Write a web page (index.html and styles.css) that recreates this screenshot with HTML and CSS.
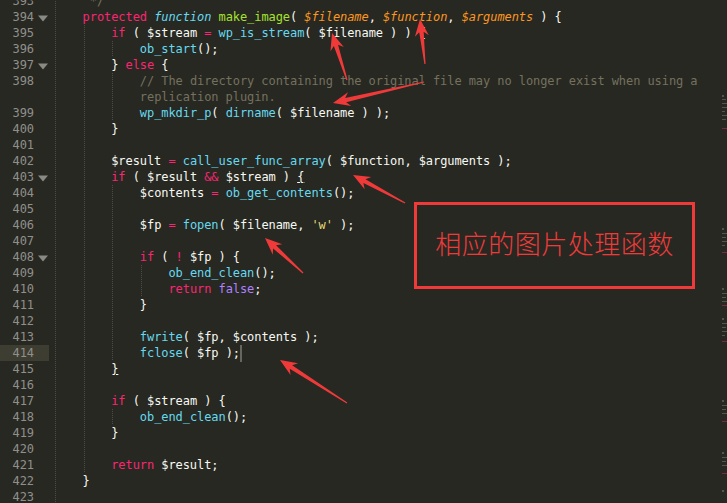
FILE: index.html
```html
<!DOCTYPE html>
<html>
<head>
<meta charset="utf-8">
<link rel="stylesheet" href="styles.css">
</head>
<body>
<div class="editor">
<div class="row"><div class="gutter"><span class="ln">393</span><span class="fold"></span></div><div class="code"><span class="ind">    </span><span class="c"> */</span></div></div>
<div class="row"><div class="gutter"><span class="ln">394</span><span class="fold"><svg width="15" height="16"><polygon points="4,6.5 14,6.5 9,12.5" fill="#8a8a84"/></svg></span></div><div class="code"><span class="ind">    </span><span class="k">protected</span> <span class="s">function</span> <span class="fn">make_image</span>( <span class="p">$filename</span>, <span class="p">$function</span>, <span class="p">$arguments</span> ) {</div></div>
<div class="row"><div class="gutter"><span class="ln">395</span><span class="fold"></span></div><div class="code"><span class="ind">    </span><span class="ind">    </span><span class="k">if</span> ( $stream <span class="k">=</span> <span class="f">wp_is_stream</span>( $filename ) ) {</div></div>
<div class="row"><div class="gutter"><span class="ln">396</span><span class="fold"></span></div><div class="code"><span class="ind">    </span><span class="ind">    </span><span class="ind">    </span><span class="f">ob_start</span>();</div></div>
<div class="row"><div class="gutter"><span class="ln">397</span><span class="fold"><svg width="15" height="16"><polygon points="4,6.5 14,6.5 9,12.5" fill="#8a8a84"/></svg></span></div><div class="code"><span class="ind">    </span><span class="ind">    </span>} <span class="k">else</span> {</div></div>
<div class="row"><div class="gutter"><span class="ln">398</span><span class="fold"></span></div><div class="code"><span class="ind">    </span><span class="ind">    </span><span class="ind">    </span><span class="c">// The directory containing the original file may no longer exist when using a</span></div></div>
<div class="row"><div class="gutter"><span class="ln"></span><span class="fold"></span></div><div class="code"><span class="ind">    </span><span class="ind">    </span><span class="ind">    </span><span class="c">replication plugin.</span></div></div>
<div class="row"><div class="gutter"><span class="ln">399</span><span class="fold"></span></div><div class="code"><span class="ind">    </span><span class="ind">    </span><span class="ind">    </span><span class="f">wp_mkdir_p</span>( <span class="f">dirname</span>( $filename ) );</div></div>
<div class="row"><div class="gutter"><span class="ln">400</span><span class="fold"></span></div><div class="code"><span class="ind">    </span><span class="ind">    </span>}</div></div>
<div class="row"><div class="gutter"><span class="ln">401</span><span class="fold"></span></div><div class="code"><span class="ind">    </span><span class="ind">    </span></div></div>
<div class="row"><div class="gutter"><span class="ln">402</span><span class="fold"></span></div><div class="code"><span class="ind">    </span><span class="ind">    </span>$result <span class="k">=</span> <span class="f">call_user_func_array</span>( $function, $arguments );</div></div>
<div class="row"><div class="gutter"><span class="ln">403</span><span class="fold"><svg width="15" height="16"><polygon points="4,6.5 14,6.5 9,12.5" fill="#8a8a84"/></svg></span></div><div class="code"><span class="ind">    </span><span class="ind">    </span><span class="k">if</span> ( $result <span class="k">&amp;&amp;</span> $stream ) <span class="u">{</span></div></div>
<div class="row"><div class="gutter"><span class="ln">404</span><span class="fold"></span></div><div class="code"><span class="ind">    </span><span class="ind">    </span><span class="ind">    </span>$contents <span class="k">=</span> <span class="f">ob_get_contents</span>();</div></div>
<div class="row"><div class="gutter"><span class="ln">405</span><span class="fold"></span></div><div class="code"><span class="ind">    </span><span class="ind">    </span><span class="ind">    </span></div></div>
<div class="row"><div class="gutter"><span class="ln">406</span><span class="fold"></span></div><div class="code"><span class="ind">    </span><span class="ind">    </span><span class="ind">    </span>$fp <span class="k">=</span> <span class="f">fopen</span>( $filename, <span class="st">'w'</span> );</div></div>
<div class="row"><div class="gutter"><span class="ln">407</span><span class="fold"></span></div><div class="code"><span class="ind">    </span><span class="ind">    </span><span class="ind">    </span></div></div>
<div class="row"><div class="gutter"><span class="ln">408</span><span class="fold"><svg width="15" height="16"><polygon points="4,6.5 14,6.5 9,12.5" fill="#8a8a84"/></svg></span></div><div class="code"><span class="ind">    </span><span class="ind">    </span><span class="ind">    </span><span class="k">if</span> ( <span class="k">!</span> $fp ) {</div></div>
<div class="row"><div class="gutter"><span class="ln">409</span><span class="fold"></span></div><div class="code"><span class="ind">    </span><span class="ind">    </span><span class="ind">    </span><span class="ind">    </span><span class="f">ob_end_clean</span>();</div></div>
<div class="row"><div class="gutter"><span class="ln">410</span><span class="fold"></span></div><div class="code"><span class="ind">    </span><span class="ind">    </span><span class="ind">    </span><span class="ind">    </span><span class="k">return</span> <span class="n">false</span>;</div></div>
<div class="row"><div class="gutter"><span class="ln">411</span><span class="fold"></span></div><div class="code"><span class="ind">    </span><span class="ind">    </span><span class="ind">    </span>}</div></div>
<div class="row"><div class="gutter"><span class="ln">412</span><span class="fold"></span></div><div class="code"><span class="ind">    </span><span class="ind">    </span><span class="ind">    </span></div></div>
<div class="row"><div class="gutter"><span class="ln">413</span><span class="fold"></span></div><div class="code"><span class="ind">    </span><span class="ind">    </span><span class="ind">    </span><span class="f">fwrite</span>( $fp, $contents );</div></div>
<div class="row"><div class="gutter active"><span class="ln">414</span><span class="fold"></span></div><div class="code"><span class="ind">    </span><span class="ind">    </span><span class="ind">    </span><span class="f">fclose</span>( $fp );<span class="cur"></span></div></div>
<div class="row"><div class="gutter"><span class="ln">415</span><span class="fold"></span></div><div class="code"><span class="ind">    </span><span class="ind">    </span><span class="u">}</span></div></div>
<div class="row"><div class="gutter"><span class="ln">416</span><span class="fold"></span></div><div class="code"><span class="ind">    </span><span class="ind">    </span></div></div>
<div class="row"><div class="gutter"><span class="ln">417</span><span class="fold"></span></div><div class="code"><span class="ind">    </span><span class="ind">    </span><span class="k">if</span> ( $stream ) {</div></div>
<div class="row"><div class="gutter"><span class="ln">418</span><span class="fold"></span></div><div class="code"><span class="ind">    </span><span class="ind">    </span><span class="ind">    </span><span class="f">ob_end_clean</span>();</div></div>
<div class="row"><div class="gutter"><span class="ln">419</span><span class="fold"></span></div><div class="code"><span class="ind">    </span><span class="ind">    </span>}</div></div>
<div class="row"><div class="gutter"><span class="ln">420</span><span class="fold"></span></div><div class="code"><span class="ind">    </span><span class="ind">    </span></div></div>
<div class="row"><div class="gutter"><span class="ln">421</span><span class="fold"></span></div><div class="code"><span class="ind">    </span><span class="ind">    </span><span class="k">return</span> $result;</div></div>
<div class="row"><div class="gutter"><span class="ln">422</span><span class="fold"></span></div><div class="code"><span class="ind">    </span>}</div></div>
<div class="row"><div class="gutter"><span class="ln">423</span><span class="fold"></span></div><div class="code"><span class="ind">    </span></div></div>
</div>

<svg class="minimap" width="5" height="503">
<g fill="#55554d">
<rect x="0" y="95" width="2" height="2"/><rect x="0" y="99" width="4" height="1"/><rect x="0" y="103" width="5" height="1"/><rect x="0" y="107" width="5" height="1"/><rect x="0" y="111" width="3" height="1"/><rect x="0" y="115" width="5" height="1"/><rect x="0" y="119" width="4" height="1"/>
<rect x="0" y="228" width="2" height="2"/><rect x="0" y="233" width="5" height="1"/><rect x="0" y="237" width="4" height="1"/><rect x="0" y="241" width="5" height="1"/><rect x="0" y="245" width="3" height="1"/>
<rect x="0" y="288" width="2" height="2"/><rect x="0" y="293" width="5" height="1"/><rect x="0" y="297" width="4" height="1"/><rect x="0" y="301" width="5" height="1"/>
<rect x="0" y="318" width="2" height="2"/><rect x="0" y="323" width="5" height="1"/><rect x="0" y="327" width="4" height="1"/><rect x="0" y="331" width="5" height="1"/><rect x="0" y="335" width="3" height="1"/>
<rect x="0" y="400" width="2" height="2"/><rect x="0" y="405" width="5" height="1"/><rect x="0" y="409" width="4" height="1"/><rect x="0" y="413" width="5" height="1"/>
<rect x="0" y="452" width="2" height="2"/><rect x="0" y="457" width="5" height="1"/><rect x="0" y="461" width="4" height="1"/><rect x="0" y="465" width="5" height="1"/>
<rect x="0" y="490" width="2" height="2"/>
</g>
<g fill="#7a2a48">
<rect x="0" y="128" width="5" height="1"/><rect x="0" y="252" width="5" height="1"/><rect x="0" y="305" width="5" height="1"/><rect x="0" y="341" width="5" height="1"/><rect x="0" y="421" width="5" height="1"/><rect x="0" y="473" width="5" height="1"/>
</g>
</svg>

<div class="note">相应的图片处理函数</div>

<svg class="arrows" width="727" height="503">
<g fill="#f03a3a">
<polygon transform="translate(332,33) rotate(-107.7)" points="0,0 -17,-7 -13,-2.2 -49.3,-0.6 -49.3,0.6 -13,2.2 -17,7"/>
<polygon transform="translate(420,19) rotate(-96.3)" points="0,0 -17,-7 -13,-2.2 -45.3,-0.6 -45.3,0.6 -13,2.2 -17,7"/>
<polygon transform="translate(333,103) rotate(167)" points="0,0 -17,-7 -13,-2.2 -93.4,-0.6 -93.4,0.6 -13,2.2 -17,7"/>
<polygon transform="translate(353,175) rotate(-151.7)" points="0,0 -17,-7 -13,-2.2 -59.1,-0.6 -59.1,0.6 -13,2.2 -17,7"/>
<polygon transform="translate(265,238) rotate(-137.4)" points="0,0 -17,-7 -13,-2.2 -51.7,-0.6 -51.7,0.6 -13,2.2 -17,7"/>
<polygon transform="translate(280,360) rotate(-147.3)" points="0,0 -17,-7 -13,-2.2 -79.6,-0.6 -79.6,0.6 -13,2.2 -17,7"/>
</g>
</svg>
</body>
</html>
```

FILE: styles.css
```css
* { box-sizing: border-box; }
html, body { margin: 0; padding: 0; height: 100%; }
body {
  background: #272822;
  overflow: hidden;
  position: relative;
  font-family: "DejaVu Sans Mono", "Liberation Mono", monospace;
}
.editor { margin-top: -7px; }
.row {
  display: flex;
  height: 16px;
  line-height: 16px;
  font-size: 12px;
  letter-spacing: -0.075px;
  color: #f8f8f2;
  white-space: nowrap;
}
.gutter {
  width: 49px;
  flex: none;
  display: flex;
  margin-right: 5px;
}
.gutter.active { background: #3e3d32; }
.ln { width: 34px; text-align: right; color: #90908a; }
.fold { width: 15px; display: flex; align-items: flex-start; }
.fold svg { display: block; }
.code { white-space: pre; }
.ind {
  display: inline-block;
  height: 16px;
  vertical-align: top;
  background: repeating-linear-gradient(to bottom, #4c4c45 0 1px, transparent 1px 2px) 1px 0 / 1px 100% no-repeat;
}
.k { color: #f92672; }
.s { color: #66d9ef; font-style: italic; }
.fn { color: #a6e22e; }
.p { color: #fd971f; font-style: italic; }
.f { color: #66d9ef; }
.c { color: #75715e; }
.n { color: #ae81ff; }
.st { color: #e6db74; }
.u { text-decoration: underline; }
.cur {
  display: inline-block;
  width: 2px;
  height: 17px;
  vertical-align: top;
  background: #66665e;
}
.minimap { position: absolute; right: 0; top: 0; }
.note {
  position: absolute;
  left: 414px;
  top: 202px;
  width: 281px;
  height: 87px;
  border: 3px solid #f03a3a;
  display: flex;
  align-items: center;
  justify-content: center;
  padding-bottom: 6px;
  color: #f03a3a;
  font-family: "Noto Sans CJK SC", sans-serif;
  font-weight: 300;
  font-size: 26px;
  letter-spacing: 0.5px;
}
.arrows { position: absolute; left: 0; top: 0; pointer-events: none; }
```
